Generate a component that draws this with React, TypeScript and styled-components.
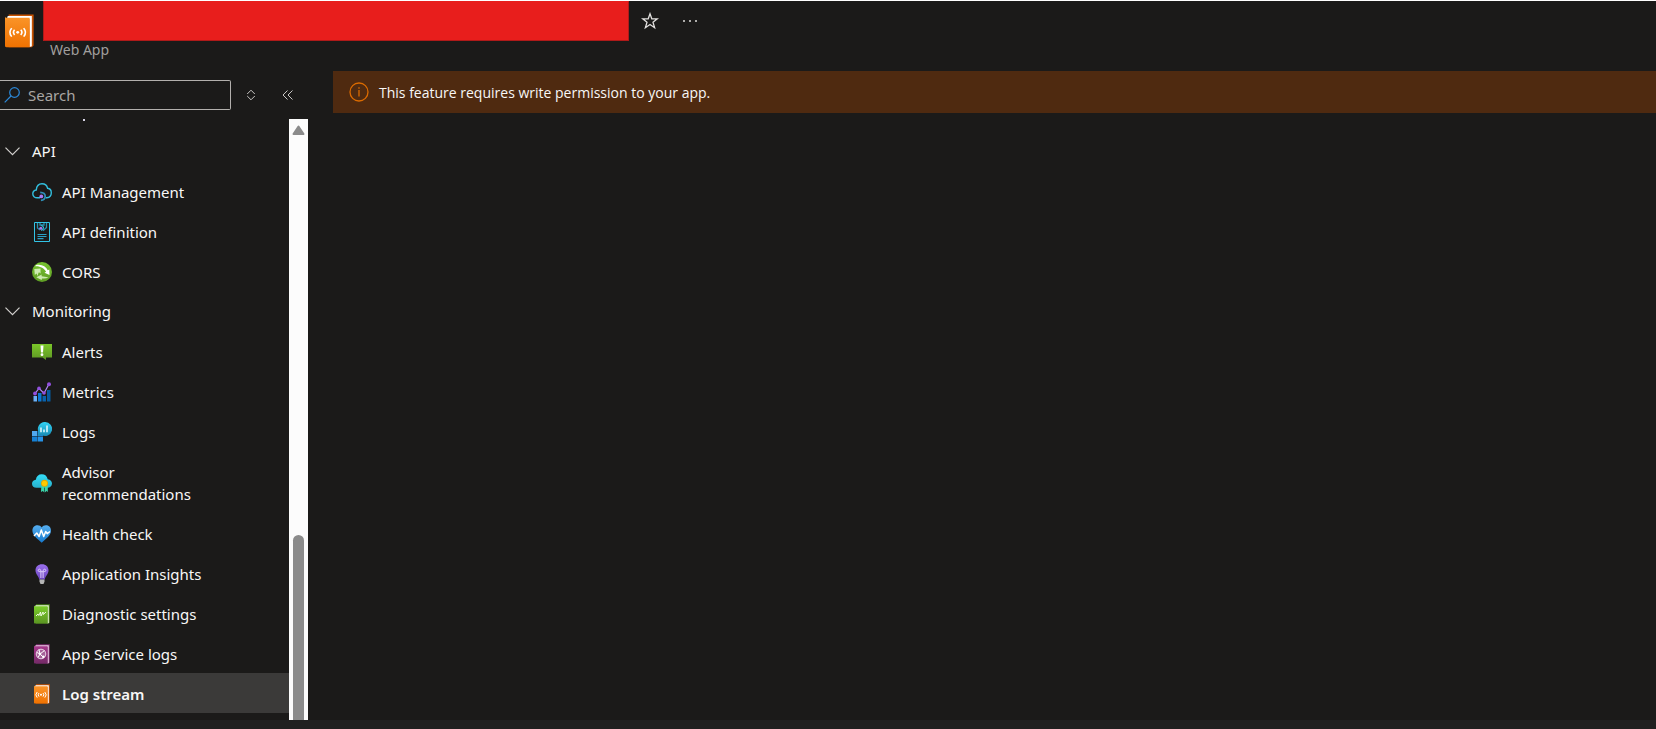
import React, { ReactNode } from "react";
import styled, { createGlobalStyle } from "styled-components";

const GlobalStyle = createGlobalStyle`
  *, *::before, *::after { box-sizing: border-box; }
  body {
    margin: 0;
    background: #1b1a19;
    color: #f8f7f6;
    font-family: "Noto Sans", "Open Sans", sans-serif;
    font-size: 15px;
    line-height: 22px;
  }
  button, input { font: inherit; color: inherit; }
  svg { display: block; flex-shrink: 0; }
`;

const Page = styled.div`
  display: flex;
  flex-direction: column;
  min-height: 100vh;
  border-top: 1px solid #ffffff;
`;

const Header = styled.header`
  display: flex;
  align-items: flex-start;
  height: 70px;
  padding-left: 5px;
`;

const ResourceIcon = styled.div`
  padding-top: 13px;
  width: 38px;
`;

const TitleBlock = styled.div`
  width: 586px;
`;

const RedactedTitle = styled.h1`
  margin: 0;
  height: 40px;
  background: #e81e1c;
  border: 1px solid #b01a19;
  border-top-color: #e81e1c;
`;

const ResourceType = styled.p`
  margin: 0;
  padding-left: 7px;
  font-size: 14px;
  line-height: 18px;
  color: #a19f9d;
`;

const HeaderActions = styled.div`
  display: flex;
  gap: 16px;
  padding: 8px 0 0 9px;
`;

const IconButton = styled.button`
  display: flex;
  align-items: center;
  justify-content: center;
  width: 24px;
  height: 24px;
  padding: 0;
  border: 0;
  background: none;
  color: #e1dfdd;
  cursor: pointer;
`;

const Body = styled.div`
  display: flex;
  flex: 1;
  gap: 25px;
`;

const Sidebar = styled.aside`
  display: flex;
  flex-direction: column;
  width: 308px;
  flex-shrink: 0;
`;

const SearchRow = styled.div`
  display: flex;
  align-items: center;
  gap: 8px;
  height: 48px;
`;

const SearchBox = styled.label`
  display: flex;
  align-items: center;
  gap: 8px;
  width: 231px;
  height: 30px;
  padding-left: 4px;
  border: 1px solid #b3b0ad;
  border-left: 0;
  border-radius: 0 2px 2px 0;
`;

const SearchInput = styled.input`
  flex: 1;
  min-width: 0;
  padding: 0;
  border: 0;
  outline: 0;
  background: none;
  &::placeholder { color: #a9a6a3; opacity: 1; }
`;

const SearchTools = styled.div`
  display: flex;
  gap: 13px;
`;

const ScrollPane = styled.div`
  display: flex;
  flex: 1;
`;

const Nav = styled.nav`
  flex: 1;
`;

const ScrolledOffItem = styled.div`
  height: 12px;
  padding-left: 83px;
  &::before {
    content: "";
    display: block;
    width: 2px;
    height: 2px;
    background: #d8d5e6;
  }
`;

const GroupButton = styled.button`
  display: flex;
  align-items: center;
  gap: 12px;
  width: 100%;
  height: 40px;
  padding: 0 5px;
  border: 0;
  background: none;
  text-align: left;
  cursor: pointer;
`;

const List = styled.ul`
  margin: 0;
  padding: 0;
  list-style: none;
`;

const ItemLink = styled.a<{ $active?: boolean }>`
  display: flex;
  align-items: center;
  gap: 10px;
  min-height: 40px;
  padding: 10px 80px 8px 32px;
  color: inherit;
  text-decoration: none;
  font-weight: ${(p) => (p.$active ? 600 : 400)};
  background: ${(p) => (p.$active ? "#3b3a39" : "transparent")};
`;

const ItemLabel = styled.span<{ $nowrap: boolean }>`
  white-space: ${(p) => (p.$nowrap ? "nowrap" : "normal")};
`;

const ScrollTrack = styled.div`
  display: flex;
  flex-direction: column;
  align-items: center;
  width: 19px;
  background: #fcfcfc;
`;

const ScrollArrow = styled.div`
  flex: 410;
  padding-top: 6px;
`;

const ScrollThumb = styled.div`
  flex: 185;
  width: 11px;
  border-radius: 6px 6px 0 0;
  background: #8b8b8b;
`;

const Main = styled.main`
  flex: 1;
  min-width: 0;
`;

const MessageBar = styled.div`
  display: flex;
  align-items: center;
  gap: 10px;
  height: 42px;
  padding-left: 16px;
  font-family: "Open Sans", "Noto Sans", sans-serif;
  font-size: 14px;
  background: #4f2a10;
`;

const MessageText = styled.span`
  padding-top: 2px;
`;

const Footer = styled.footer`
  height: 9px;
  background: #212020;
`;

const Svg = ({ children, size = 20 }: { children: ReactNode; size?: number }) => (
  <svg width={size} height={size} viewBox="0 0 20 20" fill="none" aria-hidden="true">
    {children}
  </svg>
);

const ApiManagementIcon = () => (
  <Svg>
    <path d="M8 15.800H5.200C2.600 15.800.8 14.200.8 11.800c0-2 1.400-3.500 3.500-3.800C4.600 4 6.700 1.800 10 1.800c3 0 5 1.800 5.600 4.500 2.300.3 3.700 2 3.700 4.400 0 2.800-1.700 4.700-4.500 5h-1" stroke="#32bedd" strokeWidth="1.400" />
    <path d="M8.200 10.300c3 .1 5 1.700 5 4 0 2.400-1.700 3.900-4.300 4" stroke="#2f8fb8" strokeWidth="1.700" />
    <circle cx="9.300" cy="14.400" r="1.900" fill="#a67af4" />
  </Svg>
);

const ApiDefinitionIcon = () => (
  <Svg>
    <path d="M2.500.5h15v19h-15z" stroke="#32c4e6" />
    <path d="M5.500 1v5l2.500 2M14.500 1v4.500L11 8.800M8 1v2h4V1" stroke="#2a8eac" strokeWidth="1.300" />
    <path d="M9 3.500c3 .4 3.500 3.500.2 5" stroke="#32bedd" strokeWidth="1.200" />
    <circle cx="8.800" cy="6.300" r="1.500" fill="#a67af4" />
    <path d="M5.500 12.500h9M5.500 14.500h9M5.500 16.700h6" stroke="#2aa0c4" strokeWidth="1.200" />
  </Svg>
);

const CorsIcon = () => (
  <Svg>
    <circle cx="10" cy="10" r="10" fill="url(#cors)" />
    <path d="M3.800 3.200c5.500-1.300 10 1 12 5.100l1.500-.8.200 5.500-5-2.300 1.600-.9C12 6.300 8.500 4 3.300 4.300z" fill="#fff" />
    <path d="M8.500 6.600 2.300 7l.5 5.900 1.800-1.500c.3 1.200.8 2 1.500 2.700-.2-1.700 0-2.900.9-3.900l1.600 1.400zM16.500 15.600c-2.200 1-4.300 1.200-6.500.8l-.4 1.700-5.300-2.800 5.400-2.700-.1 1.600c2.200.5 4.400.7 6.900 1.400z" fill="#cdebb0" />
    <defs><linearGradient id="cors" x1="10" y1="0" x2="10" y2="20" gradientUnits="userSpaceOnUse"><stop stopColor="#78c431" /><stop offset="1" stopColor="#5f9d24" /></linearGradient></defs>
  </Svg>
);

const AlertsIcon = () => (
  <Svg>
    <path d="M0 2h20v13.500h-6V18l-3.500-2.500H0z" fill="url(#alerts)" />
    <path d="M8.500 3.500h3L11 10.500H9z" fill="#fff" />
    <circle cx="10" cy="12.700" r="1.400" fill="#fff" />
    <defs><linearGradient id="alerts" x1="10" y1="2" x2="10" y2="18" gradientUnits="userSpaceOnUse"><stop stopColor="#7bc729" /><stop offset="1" stopColor="#5e9624" /></linearGradient></defs>
  </Svg>
);

const MetricsIcon = () => (
  <Svg>
    <path d="M1.500 14H5v5.500H1.500z" fill="#6bb0f7" />
    <path d="M6 11h3.500v8.500H6z" fill="#0a78d4" />
    <path d="M10.500 14H14v5.500h-3.500z" fill="#0862ae" />
    <path d="M15 8h3.500v11.500H15z" fill="#075a9e" />
    <path d="m3 11.500 4-5.200 5 4.900 5-9.200" stroke="#b38af5" strokeWidth="1.200" />
    <g fill="#9250df"><circle cx="3" cy="11.500" r="1.900" /><circle cx="7" cy="6.300" r="1.800" /><circle cx="12" cy="11" r="1.800" /><circle cx="17" cy="2.300" r="2" /></g>
  </Svg>
);

const LogsIcon = () => (
  <Svg>
    <path d="M0 9h5v5H0z" fill="#50a8f0" />
    <path d="M0 14.500h5v5H0z" fill="#1580d5" />
    <path d="M5.500 14.500h5.500v5H5.500z" fill="#2692e6" />
    <path d="M5.500 9H11v5H5.500z" fill="#1d87d8" />
    <path d="M13 0a7 7 0 1 1-3.500 13L5.500 14l1.300-3.500A7 7 0 0 1 13 0z" fill="url(#logs)" />
    <path d="M9 5.500v4.700M12 7.500v2.700M15 3.500v6.700" stroke="#e7fbff" strokeWidth="1.500" />
    <defs><linearGradient id="logs" x1="13" y1="0" x2="13" y2="14" gradientUnits="userSpaceOnUse"><stop stopColor="#32d4f5" /><stop offset="1" stopColor="#198ab3" /></linearGradient></defs>
  </Svg>
);

const AdvisorIcon = () => (
  <Svg>
    <path d="M4.500 14.800C1.800 14.800 0 13.100 0 10.700c0-2.200 1.500-3.700 3.800-4C4.500 3.300 6.500 1.300 9.700 1.300c3.300 0 5.400 1.900 6 5 2.700.4 4.300 2 4.300 4.300 0 2.500-1.900 4.200-4.600 4.200z" fill="url(#advisor)" />
    <path d="M9.300 12.500h3v7l-1.500-1.500L9 19zM12.900 12.500h2.900V19l-1.400-1-1.500 1.500z" fill="#3bd5ac" />
    <circle cx="12.500" cy="10.300" r="3.500" fill="#e9a600" /><circle cx="12.500" cy="10.300" r="2.600" fill="#ffca00" />
    <defs><linearGradient id="advisor" x1="10" y1="2" x2="10" y2="16" gradientUnits="userSpaceOnUse"><stop stopColor="#32dbf6" /><stop offset="1" stopColor="#27adc9" /></linearGradient></defs>
  </Svg>
);

const HealthIcon = () => (
  <Svg>
    <path d="M9.700 3.500C7.500-.3.500.6.400 6.600c0 4.900 5 8.300 9.300 12.200 4.400-4 9.300-7.300 9.300-12.200C19 .6 12-.3 9.700 3.500z" fill="url(#health)" />
    <path d="m2 12 2.800-3 2.300 3.500L9.300 6l2.400 6.500 2-5 1.500 2.200L18 7.500" stroke="#fff" strokeWidth="1.500" strokeLinejoin="round" />
    <defs><linearGradient id="health" x1="10" y1="1" x2="10" y2="19" gradientUnits="userSpaceOnUse"><stop stopColor="#56aeef" /><stop offset="1" stopColor="#1679cd" /></linearGradient></defs>
  </Svg>
);

const InsightsIcon = () => (
  <Svg>
    <path d="M10 .2c3.900 0 6.500 2.600 6.500 6 0 4-3 5.300-3.700 9.200H7.200C6.500 11.500 3.500 10.200 3.500 6.200c0-3.400 2.600-6 6.500-6z" fill="url(#insights)" />
    <path d="M8.900 14V7.200c0-2.800-3-2.500-2.700-.5.100.9 1.200 1 3.800 1s3.700-.1 3.800-1c.3-2-2.700-2.300-2.700.5V14" stroke="#ded0fa" strokeWidth="1" />
    <path d="M7.500 15.500h5v2.300L11.500 20h-3l-1-2.200z" fill="#b5b5b5" />
    <defs><linearGradient id="insights" x1="10" y1="0" x2="10" y2="16" gradientUnits="userSpaceOnUse"><stop stopColor="#9b70ee" /><stop offset="1" stopColor="#6944bd" /></linearGradient></defs>
  </Svg>
);

type BookProps = { id: string; from: string; to: string; edge: string; pages?: string; children: ReactNode };

const Book = ({ id, from, to, edge, pages = "#fff", children }: BookProps) => (
  <>
    <path d="M4 .3h13.800v18.200l-1 1H4z" fill={edge} />
    <path d="M3.500 1.200h13.300V19l-1.300.4V3H3z" fill={pages} />
    <path d="M3 2.200h12.600v17.300H2.800c-.5 0-.8-.3-.8-.7V1.300c0 .6.400.9 1 .9z" fill={`url(#${id})`} />
    {children}
    <defs><linearGradient id={id} x1="9" y1="2" x2="9" y2="20" gradientUnits="userSpaceOnUse"><stop stopColor={from} /><stop offset="1" stopColor={to} /></linearGradient></defs>
  </>
);

const DiagnosticIcon = () => (
  <Svg>
    <Book id="diagnostic" from="#7cce2b" to="#5a9322" edge="#4a7f1a" pages="#e8f7d6">
      <path d="m4 12 2-2 .8 1.500L8.500 8l.5 4 2-4 .3 2.500L14 8" stroke="#effbe2" strokeWidth="1" />
    </Book>
  </Svg>
);

const ServiceLogsIcon = () => (
  <Svg>
    <Book id="serviceLogs" from="#a8398d" to="#732a66" edge="#7b2b6c" pages="#eccbe5">
      <circle cx="9" cy="10" r="4.800" fill="#a56299" stroke="#ead5e6" />
      <path d="M5 8.500 8 10l4.500-3.500M8 10l3.500 3.500M7 5.500 8 10l-2 3.500" stroke="#fff" strokeWidth="1" />
      <circle cx="8" cy="10" r="1.300" fill="#fff" /><circle cx="11.300" cy="12.700" r="1.300" fill="#fff" />
    </Book>
  </Svg>
);

const LogStreamIcon = () => (
  <Svg>
    <Book id="logStream" from="#fa9428" to="#ef7100" edge="#c75200">
      <circle cx="9" cy="10.800" r="1" fill="#fff" />
      <path d="M7 9a2.600 2.600 0 0 0 0 3.600M11 9a2.600 2.600 0 0 1 0 3.600M5.200 8a4 4 0 0 0 0 5.600M12.800 8a4 4 0 0 1 0 5.600" stroke="#fff" strokeWidth="1" />
    </Book>
  </Svg>
);

type Item = { label: string; icon: ReactNode; active?: boolean };

const groups: { title: string; items: Item[] }[] = [
  {
    title: "API",
    items: [
      { label: "API Management", icon: <ApiManagementIcon /> },
      { label: "API definition", icon: <ApiDefinitionIcon /> },
      { label: "CORS", icon: <CorsIcon /> },
    ],
  },
  {
    title: "Monitoring",
    items: [
      { label: "Alerts", icon: <AlertsIcon /> },
      { label: "Metrics", icon: <MetricsIcon /> },
      { label: "Logs", icon: <LogsIcon /> },
      { label: "Advisor recommendations", icon: <AdvisorIcon /> },
      { label: "Health check", icon: <HealthIcon /> },
      { label: "Application Insights", icon: <InsightsIcon /> },
      { label: "Diagnostic settings", icon: <DiagnosticIcon /> },
      { label: "App Service logs", icon: <ServiceLogsIcon /> },
      { label: "Log stream", icon: <LogStreamIcon />, active: true },
    ],
  },
];

export default function App() {
  return (
    <Page>
      <GlobalStyle />
      <Header>
        <ResourceIcon>
          <svg width="29" height="34" viewBox="2 0 16 20" preserveAspectRatio="none" fill="none" aria-hidden="true">
            <Book id="resource" from="#fa9428" to="#ef7100" edge="#c75200">
              <circle cx="9" cy="10.800" r=".8" fill="#fff" />
              <path d="M7.300 9.300a2.300 2.300 0 0 0 0 3M10.700 9.300a2.300 2.300 0 0 1 0 3M5.700 8.300a4 4 0 0 0 0 5M12.300 8.300a4 4 0 0 1 0 5" stroke="#fff" strokeWidth=".9" />
            </Book>
          </svg>
        </ResourceIcon>
        <TitleBlock>
          <RedactedTitle />
          <ResourceType>Web App</ResourceType>
        </TitleBlock>
        <HeaderActions>
          <IconButton type="button" aria-label="Add to favorites">
            <svg width="18" height="18" viewBox="0 0 18 18" fill="none" stroke="currentColor" strokeWidth="1.300" aria-hidden="true">
              <path d="m9 1.800 1.800 5h5.500L12 10.200l1.600 5.500L9 12.500l-4.600 3.200L6 10.200 1.700 6.800h5.500z" />
            </svg>
          </IconButton>
          <IconButton type="button" aria-label="More actions">
            <svg width="16" height="4" viewBox="0 0 16 4" fill="currentColor" aria-hidden="true">
              <circle cx="2" cy="2" r="1" /><circle cx="8" cy="2" r="1" /><circle cx="14" cy="2" r="1" />
            </svg>
          </IconButton>
        </HeaderActions>
      </Header>
      <Body>
        <Sidebar>
          <SearchRow>
            <SearchBox>
              <svg width="16" height="16" viewBox="0 0 16 16" fill="none" stroke="#2b88d8" strokeWidth="1.200" aria-hidden="true">
                <circle cx="10.500" cy="5.500" r="4.800" /><path d="m7 9-6.300 6.300" />
              </svg>
              <SearchInput type="search" placeholder="Search" aria-label="Search" />
            </SearchBox>
            <SearchTools>
              <IconButton type="button" aria-label="Expand or collapse all">
                <svg width="10" height="12" viewBox="0 0 10 12" fill="none" stroke="#c8c6c4" aria-hidden="true">
                  <path d="M1.200 5 5 1.200 8.800 5M1.200 7 5 10.800 8.800 7" />
                </svg>
              </IconButton>
              <IconButton type="button" aria-label="Collapse menu">
                <svg width="12" height="10" viewBox="0 0 12 10" fill="none" stroke="#c8c6c4" aria-hidden="true">
                  <path d="M5.500.5 1 5l4.500 4.500M10.500.5 6 5l4.500 4.500" />
                </svg>
              </IconButton>
            </SearchTools>
          </SearchRow>
          <ScrollPane>
            <Nav aria-label="Resource menu">
              <ScrolledOffItem />
              {groups.map((group) => (
                <section key={group.title}>
                  <GroupButton type="button" aria-expanded="true">
                    <svg width="15" height="9" viewBox="0 0 15 9" fill="none" stroke="#d2d0ce" strokeWidth="1.200" aria-hidden="true">
                      <path d="m.5.700 7 7 7-7" />
                    </svg>
                    {group.title}
                  </GroupButton>
                  <List>
                    {group.items.map((item) => (
                      <li key={item.label}>
                        <ItemLink href="#" $active={item.active} aria-current={item.active ? "page" : undefined}>
                          {item.icon}
                          <ItemLabel $nowrap={item.label.length < 22}>{item.label}</ItemLabel>
                        </ItemLink>
                      </li>
                    ))}
                  </List>
                </section>
              ))}
            </Nav>
            <ScrollTrack aria-hidden="true">
              <ScrollArrow>
                <svg width="13" height="11" viewBox="0 0 13 11">
                  <path d="M6.500 1.500 11.500 9h-10z" fill="#8b8b8b" stroke="#8b8b8b" strokeWidth="2" strokeLinejoin="round" />
                </svg>
              </ScrollArrow>
              <ScrollThumb />
            </ScrollTrack>
          </ScrollPane>
        </Sidebar>
        <Main>
          <MessageBar role="status">
            <svg width="20" height="20" viewBox="0 0 20 20" fill="none" stroke="#db6b00" strokeWidth="1.300" aria-hidden="true">
              <circle cx="10" cy="10" r="9" /><path d="M10 8v6.500M10 5.200v1.500" />
            </svg>
            <MessageText>This feature requires write permission to your app.</MessageText>
          </MessageBar>
        </Main>
      </Body>
      <Footer />
    </Page>
  );
}
